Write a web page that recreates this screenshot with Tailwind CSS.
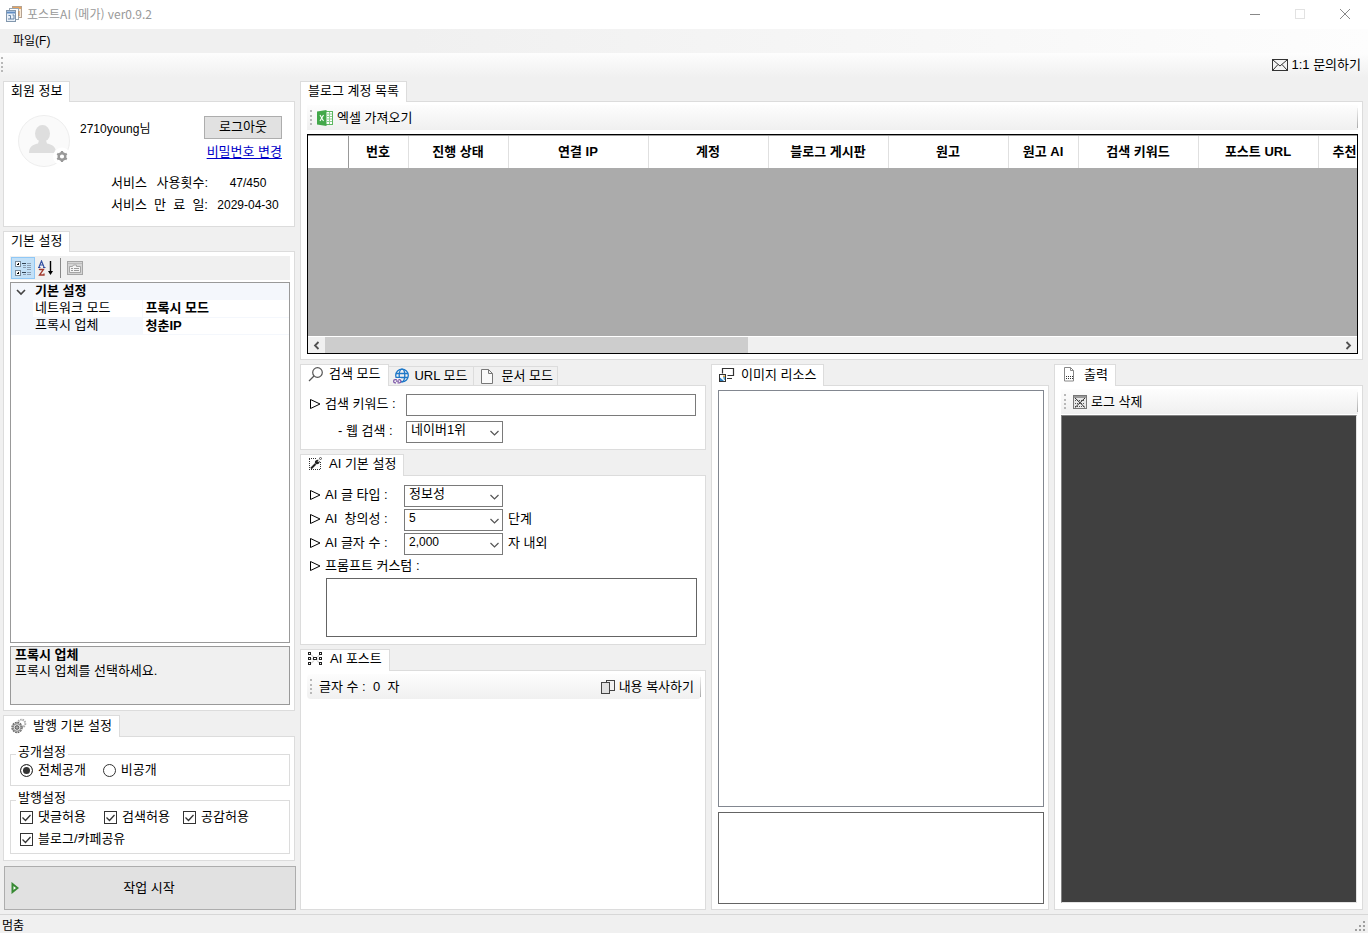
<!DOCTYPE html>
<html lang="ko">
<head>
<meta charset="utf-8">
<title>포스트AI (메가) ver0.9.2</title>
<script src="https://cdn.jsdelivr.net/npm/@tailwindcss/browser@4"></script>
</head>
<body class="flex h-screen flex-col overflow-hidden bg-[#f0f0f0] font-['Liberation_Sans','Noto_Sans_CJK_KR',sans-serif] text-[13px] leading-4 text-black">

<!-- Shared glyphs -->
<svg class="hidden">
  <symbol id="tick" viewBox="0 0 13 13"><path d="M2.500 6.500l3 3 5-5.500" fill="none" stroke="#333" stroke-width="1.300"/></symbol>
  <symbol id="bullet" viewBox="0 0 12 12"><path d="M1.500 1.500v9L11 6z" fill="none" stroke="#000"/></symbol>
  <symbol id="chevron" viewBox="0 0 9 6"><path d="M.5 1l4 4 4-4" fill="none" stroke="#555" stroke-width="1.200"/></symbol>
</svg>

<!-- Title bar -->
<header class="flex h-[29px] shrink-0 items-center bg-white pl-[6px] pr-[17px] pb-[2px] text-[#999]">
  <svg class="mr-[5px] h-4 w-4" viewBox="0 0 16 16" fill="none">
    <rect x="6.500" y=".5" width="9" height="11" fill="#f8ead8" stroke="#b5a392"/>
    <path d="M7 2h8" stroke="#e8a35c" stroke-width="2"/>
    <rect x="3.500" y="2.500" width="9" height="11" fill="#fff" stroke="#9aa5b0"/>
    <rect x=".5" y="4.500" width="9" height="11" fill="#e9f0f8" stroke="#8297ad"/>
    <path d="M1 6.500h8" stroke="#5f8dc4" stroke-width="2"/>
    <path d="M2.500 9.500h2v3.500M6.500 9h1.500v4M2 13h6" stroke="#6685a8"/>
    <path d="M13 5v5" stroke="#c9874a"/>
  </svg>
  <h1 class="font-['Noto_Sans_CJK_KR',sans-serif] text-[12px]">포스트AI (메가) ver0.9.2</h1>
  <div class="ml-auto flex items-center gap-[33px]">
    <button aria-label="최소화"><svg class="h-3 w-3" viewBox="0 0 12 12" stroke="#888"><path d="M1 6.500h10"/></svg></button>
    <button aria-label="최대화" disabled><svg class="h-3 w-3" viewBox="0 0 12 12" stroke="#e2e2e2" fill="none"><rect x="1.500" y="1.500" width="9" height="9"/></svg></button>
    <button aria-label="닫기"><svg class="h-3 w-3" viewBox="0 0 12 12" stroke="#888"><path d="M1 1l10 10M11 1L1 11"/></svg></button>
  </div>
</header>

<!-- Menu bar -->
<nav class="flex h-6 shrink-0 items-center bg-linear-to-r from-[#f0f0f0] from-30% to-[#fdfdfd] px-[13px] text-[12px]">
  <button>파일(F)</button>
</nav>

<!-- Tool strip -->
<div class="flex h-[25px] shrink-0 items-center bg-linear-to-b from-[#fdfdfd] to-[#f0f0f0] pr-[7px] pb-[2px] pl-px">
  <span class="h-[15px] border-l-2 border-dotted border-[#b8b8b8]"></span>
  <button class="ml-auto flex items-center gap-[3px]">
    <svg class="h-3 w-4" viewBox="0 0 16 12" fill="#f4f4f4" stroke="#333"><rect x=".5" y=".5" width="15" height="11"/><path d="M1 1l7 6 7-6M1 11l5-5.500M15 11l-5-5.500" fill="none"/></svg>
    1:1 문의하기
  </button>
</div>

<main class="flex min-h-0 flex-1 gap-[5px] pt-[3px] pr-[5px] pb-1 pl-[3px]">

  <!-- Left column -->
  <aside class="flex w-[292px] shrink-0 flex-col">

    <section class="flex flex-col">
      <h2 class="relative -mb-px flex h-[21px] items-center self-start border border-b-0 border-[#dcdcdc] bg-white px-[7px] pb-[2px]">회원 정보</h2>
      <div class="h-[126px] border border-[#dcdcdc] bg-white pt-[13px] pr-[12px] pl-[13px]">
        <div class="flex items-start">
          <svg class="h-[52px] w-[54px]" viewBox="0 0 54 52">
            <circle cx="27" cy="26" r="25.500" fill="#fafafa" stroke="#eee"/>
            <ellipse cx="25.500" cy="18.500" rx="7.500" ry="8.500" fill="#dedede"/>
            <path d="M12 38c0-6 3-8 9-9.500l1-3h7l1 3c6 1.500 9 3.500 9 9.500z" fill="#dedede"/>
            <circle cx="45" cy="41.500" r="9" fill="#fff"/>
            <circle cx="45" cy="41.500" r="3.300" fill="none" stroke="#999" stroke-width="2.400"/>
            <path d="M45 36v11M40.200 38.800l9.600 5.400M40.200 44.200l9.600-5.400" stroke="#999" stroke-width="2.200" stroke-dasharray="2 7"/>
          </svg>
          <span class="mt-[6px] ml-[9px] text-[12px]">2710young님</span>
          <div class="ml-auto flex flex-col items-end">
            <button class="mt-px flex h-[23px] w-[78px] items-center justify-center border border-[#adadad] bg-[#e1e1e1] pb-[2px]">로그아웃</button>
            <a href="#" class="mt-[5px] text-[#0000c8] underline underline-offset-2">비밀번호 변경</a>
          </div>
        </div>
        <dl class="mt-2 grid grid-cols-[97px_1fr] gap-y-[6px] pl-[94px]">
          <dt class="flex justify-between"><span>서비스</span><span>사용횟수:</span></dt><dd class="pl-[6px] text-center text-[12px]">47/450</dd>
          <dt class="flex justify-between"><span>서비스</span><span>만</span><span>료</span><span>일:</span></dt><dd class="pl-[6px] text-center text-[12px]">2029-04-30</dd>
        </dl>
      </div>
    </section>

    <section class="mt-1 flex min-h-0 flex-1 flex-col">
      <h2 class="relative -mb-px flex h-[21px] items-center self-start border border-b-0 border-[#dcdcdc] bg-white px-[7px] pb-[2px]">기본 설정</h2>
      <div class="flex min-h-0 flex-1 flex-col border border-[#dcdcdc] bg-white pt-1 pr-1 pb-[5px] pl-[6px]">
        <div class="flex h-6 shrink-0 items-center bg-[#f0f0f0] pl-px">
          <button aria-label="항목별" class="flex h-[22px] w-[24px] items-center justify-center border border-[#90c8f6] bg-[#c2e0f7]">
            <svg class="h-4 w-[18px]" viewBox="0 0 18 16" fill="none" shape-rendering="crispEdges"><rect x="1.500" y="1.500" width="5" height="5" fill="#fff" stroke="#7a8a9a"/><rect x="1.500" y="10.500" width="5" height="5" fill="#fff" stroke="#7a8a9a"/><path d="M3 4h2M4 3v2M3 13h2M4 12v2" stroke="#000"/><path d="M8 3.500h4M8 12.500h4" stroke="#345"/><path d="M9 5.500h3M9 7.500h3M9 14.500h3M13 3.500h4M13 5.500h4M13 7.500h4M13 9.500h4M13 12.500h4M13 14.500h4" stroke="#8a9cb0"/></svg>
          </button>
          <button aria-label="사전순" class="ml-[3px]">
            <svg class="h-4 w-4" viewBox="0 0 16 16" fill="none"><path d="M1 7l2.500-6L6 7M2 5h3M0 7.500h2.500M5 7.500h2.500" stroke="#3553a4" stroke-width="1.200"/><path d="M1.500 10V9.500h4L1.500 15h4.500v-1.500" stroke="#a33a2e" stroke-width="1.300"/><path d="M12.500 1v11" stroke="#000" stroke-width="1.400"/><path d="M10 11h5l-2.500 4z" fill="#000"/></svg>
          </button>
          <span class="mx-[6px] h-5 w-px bg-[#888]"></span>
          <button aria-label="속성 페이지" disabled>
            <svg class="h-4 w-4" viewBox="0 0 16 16" fill="none" stroke="#a5a5a5"><rect x=".5" y="1.500" width="15" height="13" fill="#d4d4d4"/><path d="M1 3.500h14" stroke="#bbb"/><path d="M2.500 6.500h3l1-1.500h3v1.500h4v6h-11z" fill="#f4f4f4"/><path d="M4 8.500h2M7 8.500h5M4 10.500h2M7 10.500h5" stroke="#999"/></svg>
          </button>
        </div>
        <div class="mt-[2px] min-h-0 flex-1 border border-[#999] bg-white">
          <table class="w-full table-fixed border-collapse bg-[#f4f7fc] text-left leading-[15px]">
            <colgroup><col class="w-[22px]"><col class="w-[109px]"><col></colgroup>
            <tbody>
              <tr class="h-[17px]"><td><svg class="ml-[5px] h-2 w-[10px]" viewBox="0 0 10 8" fill="none" stroke="#444" stroke-width="1.600"><path d="M1 2l4 4 4-4"/></svg></td><th colspan="2" class="pb-[2px] pl-[2px]">기본 설정</th></tr>
              <tr class="h-[17px]"><td></td><th class="bg-white pb-[2px] pl-[2px] font-normal">네트워크 모드</th><td class="border-b border-l border-[#f4f7fc] bg-white pb-px pl-[3px] font-bold">프록시 모드</td></tr>
              <tr class="h-[17px]"><td></td><th class="pb-[2px] pl-[2px] font-normal">프록시 업체</th><td class="border-b border-l border-[#f4f7fc] bg-white pb-px pl-[3px] font-bold">청춘IP</td></tr>
            </tbody>
          </table>
        </div>
        <div class="mt-[3px] h-[59px] shrink-0 border border-[#999] bg-[#f0f0f0] px-1">
          <p class="font-bold">프록시 업체</p>
          <p>프록시 업체를 선택하세요.</p>
        </div>
      </div>
    </section>

    <section class="mt-1 flex flex-col">
      <h2 class="relative -mb-px flex h-[22px] items-center gap-[6px] self-start border border-b-0 border-[#dcdcdc] bg-white px-[7px] pb-[2px]">
        <svg class="h-4 w-4" viewBox="0 0 16 16" fill="none"><circle cx="10.500" cy="5.500" r="3.800" stroke="#aaa" stroke-width="2" stroke-dasharray="1.500 .8"/><circle cx="6" cy="9.500" r="5" fill="#e4e4e4" stroke="#666" stroke-width="1.400" stroke-dasharray="1.800 .8"/><circle cx="6" cy="9.500" r="3.800" stroke="#888"/><circle cx="6" cy="9.500" r="1.800" fill="#aaa" stroke="#555"/></svg>
        발행 기본 설정
      </h2>
      <div class="border border-[#dcdcdc] bg-white pt-[7px] pr-1 pb-[6px] pl-[6px]">
        <fieldset class="h-[42px] border border-[#dcdcdc] pl-[9px]">
          <legend class="-ml-1 h-5 px-[2px] leading-4">공개설정</legend>
          <div class="-mt-[2px] flex gap-[17px]">
            <label class="flex items-center gap-[5px]"><input type="radio" name="open" checked class="m-0 h-[13px] w-[13px] appearance-none rounded-full border border-[#333] bg-white checked:bg-[#333] checked:shadow-[inset_0_0_0_2px_white]">전체공개</label>
            <label class="flex items-center gap-[5px]"><input type="radio" name="open" class="m-0 h-[13px] w-[13px] appearance-none rounded-full border border-[#333] bg-white checked:bg-[#333] checked:shadow-[inset_0_0_0_2px_white]">비공개</label>
          </div>
        </fieldset>
        <fieldset class="mt-1 h-[64px] border border-[#dcdcdc] pl-[9px]">
          <legend class="-ml-1 h-5 px-[2px] leading-4">발행설정</legend>
          <div class="-mt-px grid grid-cols-[84px_79px_1fr] gap-y-[6px]">
            <label class="flex items-center gap-[5px]"><span class="grid"><input type="checkbox" checked class="m-0 h-[13px] w-[13px] appearance-none border border-[#333] bg-white [grid-area:1/1]"><svg class="pointer-events-none h-[13px] w-[13px] [grid-area:1/1]"><use href="#tick"/></svg></span>댓글허용</label>
            <label class="flex items-center gap-[5px]"><span class="grid"><input type="checkbox" checked class="m-0 h-[13px] w-[13px] appearance-none border border-[#333] bg-white [grid-area:1/1]"><svg class="pointer-events-none h-[13px] w-[13px] [grid-area:1/1]"><use href="#tick"/></svg></span>검색허용</label>
            <label class="flex items-center gap-[5px]"><span class="grid"><input type="checkbox" checked class="m-0 h-[13px] w-[13px] appearance-none border border-[#333] bg-white [grid-area:1/1]"><svg class="pointer-events-none h-[13px] w-[13px] [grid-area:1/1]"><use href="#tick"/></svg></span>공감허용</label>
            <label class="col-span-3 flex items-center gap-[5px]"><span class="grid"><input type="checkbox" checked class="m-0 h-[13px] w-[13px] appearance-none border border-[#333] bg-white [grid-area:1/1]"><svg class="pointer-events-none h-[13px] w-[13px] [grid-area:1/1]"><use href="#tick"/></svg></span>블로그/카페공유</label>
          </div>
        </fieldset>
      </div>
    </section>

    <button class="mt-[5px] -mr-px ml-px grid h-[44px] shrink-0 grid-cols-[1fr_auto_1fr] items-center border border-[#adadad] bg-[#e1e1e1] pl-[6px]">
      <svg class="h-3 w-2" viewBox="0 0 8 12" fill="#fff" stroke="#388a34" stroke-width="2"><path d="M1.500 2v8L6.500 6z"/></svg>
      <span class="pr-[8px]">작업 시작</span>
    </button>
  </aside>

  <!-- Right area -->
  <div class="flex min-w-0 flex-1 flex-col">

    <section class="flex flex-col">
      <h2 class="relative -mb-px flex h-[21px] items-center self-start border border-b-0 border-[#dcdcdc] bg-white px-[7px] pb-[2px]">블로그 계정 목록</h2>
      <div class="border border-[#dcdcdc] bg-white pt-[3px] pr-1 pb-[5px] pl-[6px]">
        <div class="flex h-[25px] items-center bg-linear-to-b from-[#fdfdfd] to-[#f0f0f0] pl-[3px]">
          <span class="h-[15px] border-l-2 border-dotted border-[#b8b8b8]"></span>
          <button class="ml-[5px] flex items-center gap-1"><svg class="h-4 w-4" viewBox="0 0 16 16"><rect x="8.500" y="1.500" width="7" height="13" fill="#fff" stroke="#5cb860"/><path d="M10 4h5M10 6.500h5M10 9h5M10 11.500h5M12.500 2v12" stroke="#8ccf8f"/><path d="M0 1.500L9.500 0v16L0 14.500z" fill="#43a84a"/><path d="M3 5l3.500 6M6.500 5L3 11" stroke="#fff" stroke-width="1.100"/></svg>엑셀 가져오기</button>
          <span class="ml-auto h-5 w-px bg-linear-to-b from-[#f0f0f0] to-[#aaa]"></span>
        </div>
        <div class="mt-1 flex h-[220px] flex-col overflow-hidden border border-black bg-[#ababab]">
          <div class="min-h-0 flex-1 overflow-hidden border-t border-[#999]">
            <table class="w-[1130px] table-fixed border-collapse bg-white">
              <colgroup><col class="w-[40px]"><col class="w-[60px]"><col class="w-[100px]"><col class="w-[140px]"><col class="w-[120px]"><col class="w-[120px]"><col class="w-[120px]"><col class="w-[70px]"><col class="w-[120px]"><col class="w-[120px]"><col class="w-[120px]"></colgroup>
              <thead><tr class="h-8">
                <th class="border-r border-[#999]"></th>
                <th class="border-r border-[#e0e0e0]">번호</th>
                <th class="border-r border-[#e0e0e0]">진행 상태</th>
                <th class="border-r border-[#e0e0e0]">연결 IP</th>
                <th class="border-r border-[#e0e0e0]">계정</th>
                <th class="border-r border-[#e0e0e0]">블로그 게시판</th>
                <th class="border-r border-[#e0e0e0]">원고</th>
                <th class="border-r border-[#e0e0e0]">원고 AI</th>
                <th class="border-r border-[#e0e0e0]">검색 키워드</th>
                <th class="border-r border-[#e0e0e0]">포스트 URL</th>
                <th class="pl-[14px] text-left">추천</th>
              </tr></thead>
            </table>
          </div>
          <div class="flex h-[17px] shrink-0 items-stretch justify-between border-t border-white bg-[#f0f0f0]">
            <button aria-label="왼쪽" class="flex w-[17px] items-center justify-center"><svg class="h-[9px] w-[7px]" viewBox="0 0 7 9" fill="none" stroke="#505050" stroke-width="1.800"><path d="M5.500 1L2 4.500 5.500 8"/></svg></button>
            <div class="flex-1"><div class="h-full bg-[#cdcdcd]" style="width:41.7%"></div></div>
            <button aria-label="오른쪽" class="flex w-[17px] items-center justify-center"><svg class="h-[9px] w-[7px]" viewBox="0 0 7 9" fill="none" stroke="#505050" stroke-width="1.800"><path d="M1.500 1L5 4.500 1.500 8"/></svg></button>
          </div>
        </div>
      </div>
    </section>

    <div class="mt-1 grid min-h-0 flex-1 grid-cols-[406fr_338fr_309fr] gap-[5px]">

      <div class="flex min-h-0 min-w-0 flex-col">
        <section class="flex flex-col">
          <div role="tablist" class="relative -mb-px flex items-end">
            <button role="tab" aria-selected="true" class="flex h-[22px] items-center gap-[5px] border border-b-0 border-[#dcdcdc] bg-white pr-2 pb-[3px] pl-[7px]"><svg class="h-4 w-4" viewBox="0 0 16 16" fill="none" stroke="#555" stroke-width="1.200"><circle cx="9.500" cy="6.500" r="4.800"/><path d="M6 10L1 15"/></svg>검색 모드</button>
            <button role="tab" class="flex h-5 items-center gap-[5px] border border-l-0 border-[#dcdcdc] pr-[5px] pl-1"><svg class="h-4 w-4" viewBox="0 0 16 16" fill="none" stroke="#1e78c8" stroke-width="1.300"><circle cx="9" cy="7.500" r="6.300"/><ellipse cx="9" cy="7.500" rx="2.800" ry="6.300"/><path d="M3 5.500h12M3 9.500h12"/><path d="M0 10h8v6H0z" fill="#f0f0f0" stroke="none"/><path d="M3 14.800H2.200a1.600 1.600 0 010-3.200h1.600M5.500 11.600h.8a1.600 1.600 0 010 3.200H4.500M3 13.200h3" stroke="#7d57a8" stroke-width="1.200"/></svg>URL 모드</button>
            <button role="tab" class="flex h-5 items-center gap-[6px] border border-l-0 border-[#dcdcdc] pr-1 pl-[6px]"><svg class="h-[15px] w-4" viewBox="0 0 16 15" fill="#fafafa" stroke="#777"><path d="M1.500.5h7l4 4v10h-11zM8.500.5v4h4"/></svg>문서 모드</button>
          </div>
          <div class="flex h-[65px] flex-col gap-[5px] border border-[#dcdcdc] bg-white pt-2 pr-[9px] pl-2">
            <div class="flex h-[22px] items-center">
              <label for="kw" class="flex w-[97px] shrink-0 items-center gap-1 pb-[2px] whitespace-nowrap"><svg class="h-3 w-3"><use href="#bullet"/></svg>검색 키워드 :</label>
              <input id="kw" type="text" class="h-[22px] min-w-0 flex-1 border border-[#7a7a7a] bg-white px-1">
            </div>
            <div class="flex h-[22px] items-center">
              <label for="web" class="w-[97px] shrink-0 pb-[2px] pl-[29px]">- 웹 검색 :</label>
              <span class="grid w-[97px] items-center"><select id="web" class="h-[22px] appearance-none border border-[#7a7a7a] bg-white px-[4px] pb-1 [grid-area:1/1]"><option>네이버1위</option></select><svg class="pointer-events-none mt-px mr-[4px] h-[6px] w-[9px] justify-self-end [grid-area:1/1]"><use href="#chevron"/></svg></span>
            </div>
          </div>
        </section>

        <section class="mt-1 flex flex-col">
          <h2 class="relative -mb-px flex h-[22px] items-center gap-[7px] self-start border border-b-0 border-[#dcdcdc] bg-white px-[7px] pb-[3px]">
            <svg class="h-[14px] w-[14px]" viewBox="0 0 14 14" fill="none"><path d="M1 1.500h8M1 12.500h12M1.500 2v10M12.500 5v8" stroke="#333" stroke-dasharray="1 1"/><path d="M3 11.500L7.500 7" stroke="#222" stroke-width="2"/><path d="M10.800 3L9.500 4.300l.8.800L11.600 3.800c.5 1.800-1 3.800-3.100 3.500-1 0-1.800-1-1.600-2.200C7 3.500 9 2.400 10.800 3z" fill="#222"/><circle cx="12.500" cy="1.500" r="1" stroke="#555"/></svg>
            AI 기본 설정
          </h2>
          <div class="h-[170px] border border-[#dcdcdc] bg-white pt-[9px] pr-2 pl-2">
            <div class="grid grid-cols-[95px_99px_1fr] items-center gap-y-[2px]">
              <label for="typ" class="flex items-center gap-1 pb-[2px]"><svg class="h-3 w-3"><use href="#bullet"/></svg>AI 글 타입 :</label>
              <span class="grid items-center"><select id="typ" class="h-[22px] appearance-none border border-[#7a7a7a] bg-white px-[4px] pb-1 [grid-area:1/1]"><option>정보성</option></select><svg class="pointer-events-none mt-px mr-[4px] h-[6px] w-[9px] justify-self-end [grid-area:1/1]"><use href="#chevron"/></svg></span>
              <span></span>
              <label for="cre" class="flex items-center gap-1 pb-[2px] whitespace-pre"><svg class="h-3 w-3"><use href="#bullet"/></svg>AI  창의성 :</label>
              <span class="grid items-center"><select id="cre" class="h-[22px] appearance-none border border-[#7a7a7a] bg-white px-[4px] pb-1 text-[12px] [grid-area:1/1]"><option>5</option></select><svg class="pointer-events-none mt-px mr-[4px] h-[6px] w-[9px] justify-self-end [grid-area:1/1]"><use href="#chevron"/></svg></span>
              <span class="pb-[2px] pl-[5px]">단계</span>
              <label for="len" class="flex items-center gap-1 pb-[2px]"><svg class="h-3 w-3"><use href="#bullet"/></svg>AI 글자 수 :</label>
              <span class="grid items-center"><select id="len" class="h-[22px] appearance-none border border-[#7a7a7a] bg-white px-[4px] pb-1 text-[12px] [grid-area:1/1]"><option>2,000</option></select><svg class="pointer-events-none mt-px mr-[4px] h-[6px] w-[9px] justify-self-end [grid-area:1/1]"><use href="#chevron"/></svg></span>
              <span class="pb-[2px] pl-[5px]">자 내외</span>
            </div>
            <label for="pr" class="mt-[3px] flex items-center gap-1"><svg class="h-3 w-3"><use href="#bullet"/></svg>프롬프트 커스텀 :</label>
            <div class="mt-1 flex pl-[17px]"><textarea id="pr" class="h-[59px] flex-1 resize-none border border-[#646464] bg-white p-1"></textarea></div>
          </div>
        </section>

        <section class="mt-1 flex min-h-0 flex-1 flex-col">
          <h2 class="relative -mb-px flex h-[22px] items-center gap-[7px] self-start border border-b-0 border-[#dcdcdc] bg-white px-[7px] pb-[3px]">
            <svg class="h-[14px] w-[15px]" viewBox="0 0 15 14" fill="none"><path d="M3 2.500l3 3M12 2.500l-3 3M3 7h3M9 7h3M3 11.500l3-3M12 11.500l-3-3" stroke="#c0c0c0"/><g fill="#222"><path fill-rule="evenodd" d="M0 0h3v3H0zM1 1v1h1V1zM0 5h3v3H0zM1 6v1h1V6zM0 10h3v3H0zM1 11v1h1v-1zM11 0h3v3h-3zM12 1v1h1V1zM11 5h3v3h-3zM12 6v1h1V6zM11 10h3v3h-3zM12 11v1h1v-1zM5 5h4v3H5zM6 6v1h2V6z"/></g></svg>
            AI 포스트
          </h2>
          <div class="flex min-h-0 flex-1 flex-col border border-[#dcdcdc] bg-white pt-[3px] pr-1 pl-[6px]">
            <div class="flex h-[25px] items-center rounded-sm bg-linear-to-b from-[#fdfdfd] to-[#f0f0f0] pl-[3px]">
              <span class="h-[15px] border-l-2 border-dotted border-[#b8b8b8]"></span>
              <span class="ml-[7px] whitespace-pre">글자 수 :  0  자</span>
              <button class="ml-auto flex items-center gap-1"><svg class="h-[14px] w-[14px]" viewBox="0 0 14 14" fill="#f2f2f2" stroke="#444"><rect x="5.500" y=".5" width="8" height="10"/><rect x=".5" y="2.500" width="8" height="11" fill="#e0e0e0"/></svg>내용 복사하기</button>
              <span class="ml-[6px] h-5 w-px bg-linear-to-b from-[#f0f0f0] to-[#aaa]"></span>
            </div>
          </div>
        </section>
      </div>

      <section class="flex min-h-0 min-w-0 flex-col">
        <h2 class="relative -mb-px flex h-[22px] items-center gap-[6px] self-start border border-b-0 border-[#dcdcdc] bg-white px-[7px] pb-[2px]">
          <svg class="h-4 w-4" viewBox="0 0 16 16" fill="none"><path d="M3.500 6.500v-5h11v7h-6M8 11.500h5" stroke="#333" stroke-width="1.200"/><rect x=".5" y="7.500" width="6" height="7" fill="#fff" stroke="#333"/><path d="M1 10.500l4 3.500H1z" fill="#2a7fc0"/><path d="M4 10h2v3H5z" fill="#5aa9dc"/><rect x="4" y="8.500" width="2" height="1.500" fill="#d9a441"/></svg>
          이미지 리소스
        </h2>
        <div class="flex min-h-0 flex-1 flex-col gap-[5px] border border-[#dcdcdc] bg-white pt-1 pr-1 pb-[5px] pl-[6px]">
          <div class="min-h-0 flex-1 border border-[#828790] bg-white"></div>
          <div class="h-[92px] shrink-0 border border-[#646464] bg-white"></div>
        </div>
      </section>

      <section class="flex min-h-0 min-w-0 flex-col">
        <h2 class="relative -mb-px flex h-[22px] items-center gap-[6px] self-start border border-b-0 border-[#dcdcdc] bg-white px-[7px] pb-[2px]">
          <svg class="h-[15px] w-4" viewBox="0 0 16 15" fill="none" stroke="#888"><path d="M2.500.5h6l3 3v10.500h-9zM8.500.5v3h3"/><path d="M4 9.500h7M4 11.500h7" stroke="#333" stroke-dasharray="1 1"/></svg>
          출력
        </h2>
        <div class="flex min-h-0 flex-1 flex-col border border-[#dcdcdc] bg-white pt-[3px] pr-1 pb-[6px] pl-[6px]">
          <div class="mb-px flex h-[25px] shrink-0 items-center bg-linear-to-b from-[#fdfdfd] to-[#f0f0f0] pl-[3px]">
            <span class="h-[15px] border-l-2 border-dotted border-[#b8b8b8]"></span>
            <button class="ml-[7px] flex items-center gap-1"><svg class="h-[14px] w-[14px]" viewBox="0 0 14 14" fill="none"><rect x=".5" y=".5" width="13" height="13" fill="#e8e8e8" stroke="#777"/><path d="M1 2h12" stroke="#999" stroke-width="2"/><path d="M2 5.500h10M2 8.500h10M2 11.500h10" stroke="#555" stroke-dasharray="1 1"/><path d="M2 3l10 9.500M12 3L2 12.500" stroke="#333"/></svg>로그 삭제</button>
            <span class="ml-auto h-5 w-px bg-linear-to-b from-[#f0f0f0] to-[#aaa]"></span>
          </div>
          <div class="mr-px min-h-0 flex-1 border border-t-[#828282] border-r-[#e3e3e3] border-b-[#e3e3e3] border-l-[#828282] bg-[#404040]"></div>
        </div>
      </section>
    </div>
  </div>
</main>

<!-- Status bar -->
<footer class="flex h-[19px] shrink-0 items-center justify-between border-t border-[#d7d7d7] pt-[3px] pl-[2px] text-[12px]">
  <span>멈춤</span>
  <svg class="mr-px h-3 w-3" viewBox="0 0 12 12" fill="#a0a0a0"><path d="M8 1h2v2H8zM4 5h2v2H4zM8 5h2v2H8zM0 9h2v2H0zM4 9h2v2H4zM8 9h2v2H8z"/></svg>
</footer>
</body>
</html>
